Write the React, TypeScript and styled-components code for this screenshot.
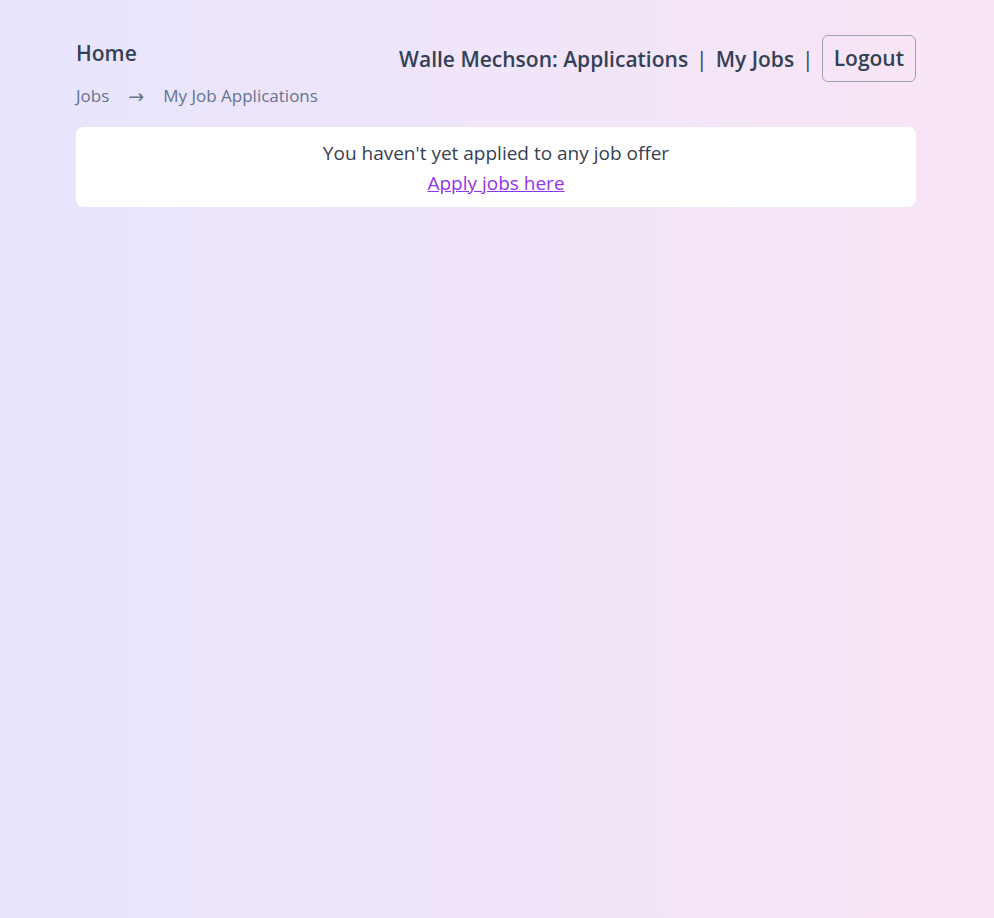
import React from "react";
import styled, { createGlobalStyle } from "styled-components";

const GlobalStyle = createGlobalStyle`
  html, body {
    margin: 0;
    padding: 0;
  }
  body {
    font-family: "Open Sans", "Noto Sans", "Liberation Sans", sans-serif;
    background: linear-gradient(to right, #e8e5fe, #f9e5f5);
    min-height: 100vh;
  }
`;

const Page = styled.div`
  min-height: 918px;
  box-sizing: border-box;
  padding-right: 2px;
`;

const Container = styled.div`
  max-width: 840px;
  margin: 0 auto;
  padding-top: 35px;
  display: flex;
  flex-direction: column;
  gap: 19px;
`;

const Header = styled.header`
  display: flex;
  justify-content: space-between;
  align-items: flex-start;
`;

const LeftCol = styled.div`
  display: flex;
  flex-direction: column;
  gap: 13px;
`;

const HomeLink = styled.a`
  font-size: 21px;
  font-weight: 600;
  line-height: 36px;
  color: #334155;
  text-decoration: none;
`;

const Breadcrumb = styled.nav`
  display: flex;
  align-items: center;
  gap: 19px;
  font-size: 17px;
  line-height: 24px;
  color: #64748b;
`;

const Crumb = styled.span``;

const Arrow = styled.span`
  font-family: "DejaVu Sans", sans-serif;
  font-size: 19px;
  line-height: 24px;
`;

const Nav = styled.nav`
  display: flex;
  align-items: center;
  gap: 8px;
  font-size: 21px;
  font-weight: 600;
  color: #334155;
`;

const NavItem = styled.a`
  text-decoration: none;
  color: inherit;
`;

const Sep = styled.span`
  font-weight: 500;
`;

const LogoutButton = styled.button`
  font-family: inherit;
  font-size: 21px;
  font-weight: 600;
  color: #334155;
  background: transparent;
  border: 1px solid #9ca3af;
  border-radius: 6px;
  padding: 9px 11px;
  line-height: 27px;
  cursor: pointer;
`;

const Card = styled.section`
  background: #ffffff;
  border-radius: 8px;
  padding: 11px 10px 9px;
  display: flex;
  flex-direction: column;
  align-items: center;
  font-size: 19px;
  line-height: 30px;
`;

const Message = styled.p`
  margin: 0;
  color: #374151;
`;

const ApplyLink = styled.a`
  color: #9333ea;
  text-decoration: underline;
`;

export default function App() {
  return (
    <Page>
      <GlobalStyle />
      <Container>
        <Header>
          <LeftCol>
            <HomeLink href="#">Home</HomeLink>
            <Breadcrumb>
              <Crumb>Jobs</Crumb>
              <Arrow>→</Arrow>
              <Crumb>My Job Applications</Crumb>
            </Breadcrumb>
          </LeftCol>
          <Nav>
            <NavItem href="#">Walle Mechson: Applications</NavItem>
            <Sep>|</Sep>
            <NavItem href="#">My Jobs</NavItem>
            <Sep>|</Sep>
            <LogoutButton>Logout</LogoutButton>
          </Nav>
        </Header>
        <Card>
          <Message>You haven't yet applied to any job offer</Message>
          <ApplyLink href="#">Apply jobs here</ApplyLink>
        </Card>
      </Container>
    </Page>
  );
}
